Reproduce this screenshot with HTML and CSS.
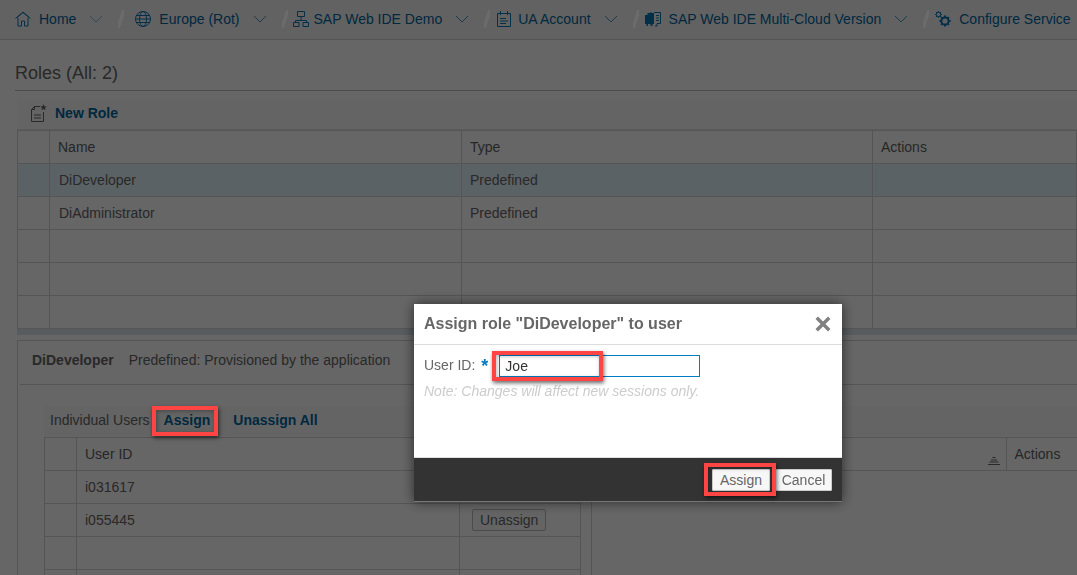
FILE: index.html
```html
<!DOCTYPE html>
<html lang="en">
<head>
    <meta charset="UTF-8">
    <meta name="viewport" content="width=device-width, initial-scale=1.0">
    <title>Roles</title>
    <link rel="stylesheet" href="styles.css">
</head>
<body>
    <nav class="crumbs">
        <a class="crumb crumb-home">
            <svg class="crumb-icon" viewBox="0 0 16 16"><path d="M.5 7.500 8 1l7.500 6.500M2 6.500l6-5 6 5M3 7v8h3.500v-5h3v5H13V7"/></svg>
            <span>Home</span>
            <svg class="chevron" viewBox="0 0 14 8"><path d="M1 1l6 6 6-6"/></svg>
        </a>
        <i class="slash slash-first"></i>
        <a class="crumb">
            <svg class="crumb-icon" viewBox="0 0 16 16"><circle cx="8" cy="8" r="7.500"/><ellipse cx="8" cy="8" rx="3.500" ry="7.500"/><path d="M.5 8h15M1.500 4.500h13M1.500 11.500h13"/></svg>
            <span>Europe (Rot)</span>
            <svg class="chevron" viewBox="0 0 14 8"><path d="M1 1l6 6 6-6"/></svg>
        </a>
        <i class="slash"></i>
        <a class="crumb crumb-sap">
            <svg class="crumb-icon" viewBox="0 0 16 16"><path d="M4.500.5h7v5h-7zM8 5.500v4M2.500 9.500h11M.5 11.500h5.500v4H.5zM10 11.500h5.500v4H10zM2.500 9.500v2M13.500 9.500v2"/></svg>
            <span>SAP Web IDE Demo</span>
            <svg class="chevron" viewBox="0 0 14 8"><path d="M1 1l6 6 6-6"/></svg>
        </a>
        <i class="slash"></i>
        <a class="crumb crumb-ua">
            <svg class="crumb-icon" viewBox="0 0 16 16"><path d="M1.500 2.500h13v13h-13zM4.500 0v4M11.500 0v4M4 7.500h6M4 10h8M4 12.500h6"/></svg>
            <span>UA Account</span>
            <svg class="chevron" viewBox="0 0 14 8"><path d="M1 1l6 6 6-6"/></svg>
        </a>
        <i class="slash"></i>
        <a class="crumb crumb-multi">
            <svg class="crumb-icon" viewBox="0 0 16 16"><path class="solid" d="M0 4h2.500V2H5v-.5h2V2h2v11H7.500v2H5.500v-2H3v2H1.500v-2H0z"/><path d="M9 1.500h6.500v11H12v2.500h-2M11 4.500h3M11 7h3M11 9.500h3"/></svg>
            <span>SAP Web IDE Multi-Cloud Version</span>
            <svg class="chevron" viewBox="0 0 14 8"><path d="M1 1l6 6 6-6"/></svg>
        </a>
        <i class="slash"></i>
        <a class="crumb crumb-config">
            <svg class="crumb-icon" viewBox="0 0 16 16"><circle cx="3.500" cy="3.500" r="2.200"/><path d="M3.500 0v1.300M3.500 5.700V7M0 3.500h1.300M5.700 3.500H7M1 1l1 1M5 5l1 1M6 1 5 2M1 6l1-1"/><circle class="thick" cx="10" cy="10" r="3.600"/><path class="thick" d="M10 4.500v2M10 13.500v2M4.500 10h2M13.500 10h2M6.100 6.100l1.400 1.400M12.500 12.500l1.400 1.400M13.900 6.100l-1.400 1.400M7.500 12.500l-1.400 1.400"/></svg>
            <span>Configure Service</span>
        </a>
    </nav>

    <main class="content">
        <h1 class="page-title">Roles (All: 2)</h1>

        <section class="panel">
            <div class="toolbar toolbar-roles">
                <svg class="new-icon" viewBox="0 0 16 18"><path d="M9 2.500H3.500L.5 5.500v12h12V8M3.500 2.500v3h-3M3 11h7M3 14h7"/><path class="solid" d="M12.500 0l.9 2.300 2.400.1-1.900 1.500.7 2.300-2.100-1.300-2.100 1.300.7-2.300-1.900-1.500 2.400-.1z"/></svg>
                <a class="link">New Role</a>
            </div>
            <table class="grid roles-grid">
                <colgroup><col class="col-select"><col class="col-name"><col class="col-type"><col></colgroup>
                <tr class="head"><td></td><td>Name</td><td>Type</td><td>Actions</td></tr>
                <tr class="selected"><td></td><td>DiDeveloper</td><td class="cell-type">Predefined</td><td></td></tr>
                <tr><td></td><td>DiAdministrator</td><td class="cell-type">Predefined</td><td></td></tr>
                <tr><td></td><td></td><td></td><td></td></tr>
                <tr><td></td><td></td><td></td><td></td></tr>
                <tr><td></td><td></td><td></td><td></td></tr>
            </table>
        </section>

        <div class="splitter"></div>

        <section class="detail">
            <div class="detail-head">
                <strong>DiDeveloper</strong>
                <span>Predefined: Provisioned by the application</span>
            </div>
            <div class="detail-body">
                <div class="toolbar toolbar-users">
                    <span class="toolbar-label">Individual Users</span>
                    <a class="link link-assign">Assign<b class="callout callout-toolbar"></b></a>
                    <a class="link">Unassign All</a>
                </div>
                <div class="user-tables">
                    <table class="grid users-grid">
                        <colgroup><col class="col-select"><col class="col-user"><col></colgroup>
                        <tr class="head"><td></td><td>User ID</td><td></td></tr>
                        <tr><td></td><td class="cell-user">i031617</td><td></td></tr>
                        <tr><td></td><td class="cell-user">i055445</td><td class="cell-btn"><button class="btn-flat">Unassign</button></td></tr>
                        <tr><td></td><td></td><td></td></tr>
                        <tr><td></td><td></td><td></td></tr>
                    </table>
                    <div class="attrs-pane">
                        <table class="grid attrs-grid">
                            <colgroup><col class="col-attr"><col></colgroup>
                            <tr class="head"><td class="cell-sort"><svg class="sort-icon" viewBox="0 0 12 8"><path d="M4.500.5h3M3 3h6M1.500 5h9M0 7.500h12"/></svg></td><td>Actions</td></tr>
                        </table>
                    </div>
                </div>
            </div>
        </section>
    </main>

    <div class="overlay"></div>

    <div class="dialog">
        <header class="dialog-head">
            <h2>Assign role "DiDeveloper" to user</h2>
            <svg class="dialog-close" viewBox="0 0 14 14"><path d="M1.500 1.500l11 11M12.500 1.500l-11 11"/></svg>
        </header>
        <div class="dialog-body">
            <div class="field">
                <label for="userId">User ID:</label>
                <span class="required">*</span>
                <span class="input-wrap">
                    <input type="text" id="userId" value="Joe">
                    <b class="callout callout-input"></b>
                </span>
            </div>
            <p class="note">Note: Changes will affect new sessions only.</p>
        </div>
        <footer class="dialog-foot">
            <span class="btn-wrap">
                <button class="btn btn-assign">Assign</button>
                <b class="callout callout-btn"></b>
            </span>
            <button class="btn btn-cancel">Cancel</button>
        </footer>
    </div>
</body>
</html>
```

FILE: styles.css
```css
* {
    box-sizing: border-box;
}
html, body {
    height: 575px;
}
body {
    margin: 0;
    overflow: hidden;
    font-family: "Liberation Sans", Arial, sans-serif;
    font-size: 14px;
    color: #666;
    background: #fff;
}

/* top breadcrumb bar */
.crumbs {
    display: flex;
    align-items: center;
    height: 40px;
    padding: 0 0 2px 15px;
    white-space: nowrap;
    background: #f5f5f5;
    border-bottom: 1px solid #d4d4d4;
    color: #00679e;
}
.crumb {
    display: flex;
    align-items: center;
}
.crumb-icon {
    width: 16px;
    height: 16px;
    margin-right: 8px;
    fill: none;
    stroke: #0a77b5;
    stroke-width: 1;
}
.crumb-sap .crumb-icon {
    margin-right: 5px;
}
.crumb-ua .crumb-icon {
    margin: 0 6px 0 1px;
}
.crumb-multi .crumb-icon,
.crumb-config .crumb-icon {
    margin-left: 1px;
}
.crumb-icon .solid {
    fill: #0a77b5;
    stroke: none;
}
.crumb-icon .thick {
    stroke-width: 2;
}
.chevron {
    width: 14px;
    height: 8px;
    margin-left: 13px;
    fill: none;
    stroke: #0a77b5;
    stroke-width: 1;
    opacity: .75;
}
.crumb-home .chevron {
    opacity: .5;
}
.slash {
    position: relative;
    z-index: 11;
    width: 6px;
    height: 18px;
    margin: 0 5px 0 15px;
    background: linear-gradient(to bottom right, transparent 36%, #6b6b6b 36%, #6b6b6b 64%, transparent 64%);
}
.slash-first {
    margin-right: 11px;
}

/* roles panel */
.content {
    padding-left: 15px;
}
.page-title {
    height: 51px;
    margin: 0 0 8px;
    padding-top: 23px;
    font-size: 18px;
    font-weight: normal;
    line-height: 20px;
    border-bottom: 1px solid #bbb;
}
.panel {
    margin-left: 2px;
}
.toolbar {
    display: flex;
    align-items: center;
    height: 30px;
    background: #fafafa;
}
.toolbar-roles {
    height: 31px;
    padding: 0 0 2px 14px;
    border-bottom: 1px solid #e4e4e4;
}
.new-icon {
    width: 16px;
    height: 18px;
    margin-right: 8px;
    fill: none;
    stroke: #666;
    stroke-width: 1;
}
.new-icon .solid {
    fill: #666;
    stroke: none;
}
.link {
    font-weight: bold;
    color: #00679e;
}

/* tables */
.grid {
    border-collapse: collapse;
    table-layout: fixed;
    width: 100%;
}
.grid td {
    height: 33px;
    padding: 0 9px;
    border: 1px solid #d4d4d4;
    white-space: nowrap;
}
.grid .head td,
.grid .cell-type,
.grid .cell-user {
    padding-left: 8px;
}
.grid .head td {
    color: #5f5f5f;
}
.col-select {
    width: 32px;
}
.col-name {
    width: 412px;
}
.col-type {
    width: 411px;
}
.selected td {
    background: #e4f5fc;
}
.splitter {
    height: 6px;
    margin: 0 0 5px 2px;
    background: #d7e6f0;
}

/* role detail */
.detail {
    height: 235px;
    margin-left: 2px;
    padding-left: 2px;
    overflow: hidden;
    border-top: 1px solid #d4d4d4;
    border-left: 1px solid #d4d4d4;
}
.detail-head {
    display: flex;
    align-items: center;
    height: 44px;
    padding: 0 0 6px 12px;
    border-bottom: 1px solid #d4d4d4;
}
.detail-head strong {
    margin-right: 15px;
}
.detail-body {
    padding: 21px 0 0 24px;
}
.toolbar-users {
    margin-bottom: 1px;
    padding: 0 0 2px 6px;
}
.toolbar-label {
    margin-right: 14px;
}
.link-assign {
    position: relative;
    margin-right: 23px;
}
.user-tables {
    display: flex;
    gap: 10px;
}
.users-grid {
    width: 537px;
    flex: none;
    align-self: flex-start;
}
.col-user {
    width: 383px;
}
.attrs-pane {
    flex: 1;
    border-left: 1px solid #d4d4d4;
}
.col-attr {
    width: 414px;
}
.attrs-grid td {
    border-left: 0;
    border-right: 0;
}
.attrs-grid td + td {
    border-left: 1px solid #d4d4d4;
}
.cell-sort {
    position: relative;
}
.sort-icon {
    position: absolute;
    right: 6px;
    bottom: 5px;
    width: 12px;
    height: 8px;
    fill: none;
    stroke: #666;
}
.grid .cell-btn {
    padding-left: 12px;
}
.btn-flat {
    display: block;
    height: 22px;
    padding: 0 7px;
    font: 14px "Liberation Sans", Arial, sans-serif;
    color: #666;
    background: #fafafa;
    border: 1px solid #bbb;
    border-radius: 2px;
}

/* dialog */
.overlay {
    position: fixed;
    inset: 0;
    z-index: 10;
    background: rgba(0, 0, 0, .6);
}
.dialog {
    position: fixed;
    left: 414px;
    top: 304px;
    z-index: 20;
    display: flex;
    flex-direction: column;
    width: 428px;
    height: 198px;
    background: #fff;
    box-shadow: 0 0 12px rgba(0, 0, 0, .6);
}
.dialog-head {
    display: flex;
    align-items: center;
    justify-content: space-between;
    height: 41px;
    padding: 0 11px 0 10px;
    border-bottom: 1px solid #ddd;
}
.dialog-head h2 {
    margin: 0;
    font-size: 16px;
    color: #666;
}
.dialog-close {
    width: 16px;
    height: 16px;
    fill: none;
    stroke: #808080;
    stroke-width: 3;
}
.dialog-body {
    flex: 1;
    padding: 10px 10px 0;
}
.field {
    display: flex;
    align-items: center;
    height: 22px;
}
.field label {
    padding-bottom: 2px;
}
.required {
    margin: 0 11px 0 6px;
    font-size: 18px;
    font-weight: bold;
    line-height: 18px;
    color: #007cc0;
}
.input-wrap {
    position: relative;
}
.input-wrap input {
    display: block;
    width: 201px;
    height: 22px;
    padding: 0 5px;
    font: 14px "Liberation Sans", Arial, sans-serif;
    color: #333;
    border: 1px solid #007cc0;
    outline: none;
}
.note {
    margin: 4px 0 0;
    font-style: italic;
    line-height: 20px;
    color: #ccc;
}
.dialog-foot {
    display: flex;
    align-items: center;
    justify-content: flex-end;
    gap: 5px;
    height: 45px;
    padding-right: 10px;
    background: #333;
    border-top: 1px solid #ddd;
    border-bottom: 1px solid #777;
}
.btn-wrap {
    position: relative;
    display: block;
}
.btn {
    display: block;
    height: 22px;
    font: 14px "Liberation Sans", Arial, sans-serif;
    color: #666;
    background: #f7f7f7;
    border: 1px solid #ccc;
    border-radius: 1px;
}
.btn-assign {
    width: 58px;
    padding: 0;
}
.btn-cancel {
    width: 57px;
    padding: 0;
}

/* red annotation boxes */
.callout {
    position: absolute;
    z-index: 30;
    border: 4px solid #ff4444;
    box-shadow: 1px 2px 4px rgba(0, 0, 0, .6), inset 1px 1px 4px rgba(0, 0, 0, .3);
    pointer-events: none;
}
.callout-toolbar {
    left: -12px;
    right: -8px;
    top: -6px;
    bottom: -8px;
}
.callout-input {
    left: -7px;
    top: -4px;
    width: 111px;
    height: 30px;
}
.callout-btn {
    left: -8px;
    right: -6px;
    top: -6px;
    bottom: -5px;
}
```
